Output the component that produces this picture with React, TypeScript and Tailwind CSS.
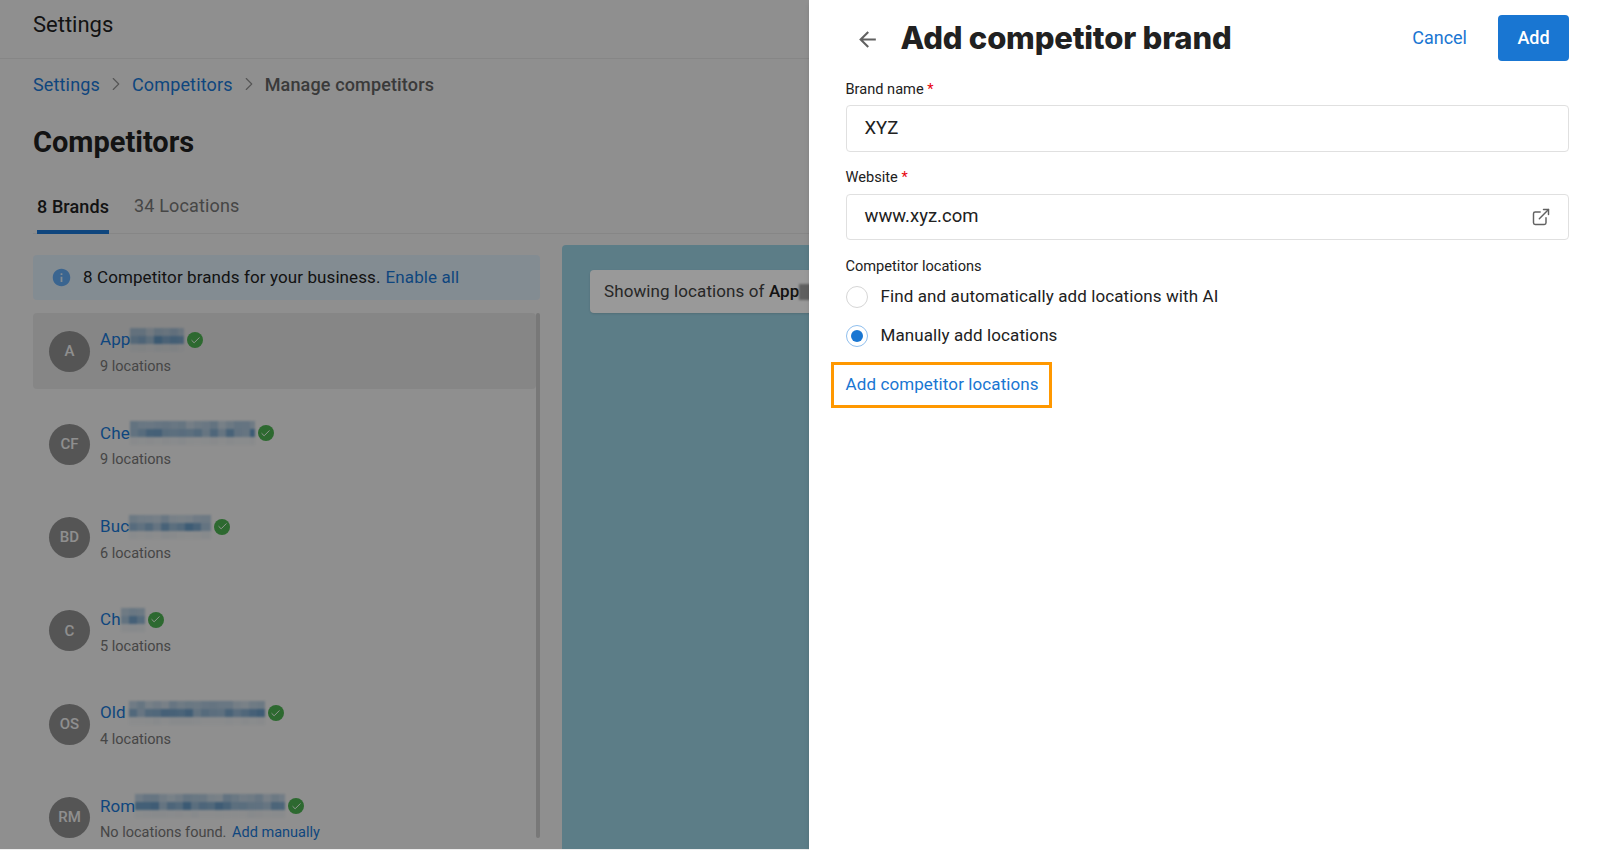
import { ChevronRight, ExternalLink, Check } from 'lucide-react';

interface Brand {
  initials: string;
  name: string;
  blur: number;
  sub: string;
  noLocations?: boolean;
}

const brands: Brand[] = [
  { initials: 'A', name: 'App', blur: 54, sub: '9 locations' },
  { initials: 'CF', name: 'Che', blur: 125, sub: '9 locations' },
  { initials: 'BD', name: 'Buc', blur: 82, sub: '6 locations' },
  { initials: 'C', name: 'Ch', blur: 24, sub: '5 locations' },
  { initials: 'OS', name: 'Old', blur: 136, sub: '4 locations' },
  { initials: 'RM', name: 'Rom', blur: 150, sub: 'No locations found.', noLocations: true },
];

// pixelated part of the name, same mosaic look as the screenshot
function Mosaic({ width, seed }: { width: number; seed: number }) {
  const cols = Math.ceil(width / 8);
  const cells = [];
  for (let c = 0; c < cols; c++) {
    for (let r = 0; r < 3; r++) {
      const n = Math.abs(Math.sin((c + 1) * 12.9 + (r + 1) * 78.2 + seed) * 43758.5) % 1;
      const base = r === 1 ? 0.5 : r === 0 ? 0.26 : 0.04;
      cells.push(<rect key={`${c}-${r}`} x={c * 8} y={r * 8} width={8} height={8} fill="#1565a8" opacity={base * (0.6 + n * 0.7)} />);
    }
  }
  return (
    <svg width={width} height={24} viewBox={`0 0 ${width} 24`} className="block shrink-0 blur-[1px]">
      {cells}
    </svg>
  );
}

function BrandRow({ brand, index }: { brand: Brand; index: number }) {
  return (
    <div className={`flex items-center h-[76px] pl-4 rounded ${index === 0 ? 'bg-[#e0e0e0]' : ''}`}>
      <div className="w-[41px] h-[41px] rounded-full bg-[#8e8e8e] text-[#eeeeee] flex items-center justify-center text-[15px] font-medium shrink-0">
        {brand.initials}
      </div>
      <div className="ml-[10px] pt-[3px]">
        <div className="flex items-center h-[24px]">
          <span className="text-[17px] tracking-[0.1px] text-[#1976d2]">{brand.name}</span>
          <span className={brand.name === 'Old' ? 'ml-[3px]' : ''}>
            <Mosaic width={brand.blur} seed={index * 3.1} />
          </span>
          <span className="ml-[3px] w-[16px] h-[16px] rounded-full bg-[#4caf50] flex items-center justify-center">
            <Check className="w-[11px] h-[11px] text-white" strokeWidth={2} />
          </span>
        </div>
        <div className="text-[14.5px] leading-[20px] mt-[5px] text-[#757575]">
          {brand.sub}
          {brand.noLocations && <span className="ml-[2px] text-[#1976d2]"> Add manually</span>}
        </div>
      </div>
    </div>
  );
}

export default function App() {
  return (
    <div className="relative w-[1600px] h-[850px] overflow-hidden bg-[#eeeeee] font-['Roboto',sans-serif]">
      {/* Pagina de fundo */}
      <div className="h-[59px] px-[33px] pb-[10px] flex items-center border-b border-[#e0e0e0]">
        <h2 className="text-[22px] text-[#212121]">Settings</h2>
      </div>

      <div className="flex items-center h-[24px] mt-[13px] px-[33px] text-[18px] tracking-[0.15px]">
        <span className="text-[#1976d2]">Settings</span>
        <ChevronRight className="w-[22px] h-[22px] mx-[5px] text-[#8e8e8e]" strokeWidth={1.25} />
        <span className="text-[#1976d2]">Competitors</span>
        <ChevronRight className="w-[22px] h-[22px] mx-[5px] text-[#8e8e8e]" strokeWidth={1.25} />
        <span className="font-medium text-[#616161]">Manage competitors</span>
      </div>

      <h1 className="mt-[27px] px-[33px] text-[29px] leading-[38px] font-bold text-[#212121]">Competitors</h1>

      <div className="mt-[24px] ml-[33px] flex items-end h-[49px] border-b border-[#e0e0e0]">
        <div className="ml-[4px] h-[49px] flex items-center border-b-[4px] border-[#1976d2] -mb-px pb-[3px] text-[18px] tracking-[0.1px] font-medium text-[#212121]">
          8 Brands
        </div>
        <div className="ml-[25px] h-[49px] flex items-center pb-[6px] text-[18px] tracking-[0.15px] text-[#757575]">34 Locations</div>
      </div>

      <div className="flex pl-[33px] mt-[11px] h-[604px]">
        <div className="w-[507px] pt-[10px] shrink-0">
          <div className="h-[45px] rounded bg-[#dbe9f4] flex items-center pl-[18px] text-[17px] tracking-[0.1px] text-[#212121]">
            <svg width="21" height="21" viewBox="0 0 24 24" className="fill-[#62a8f0]">
              <path d="M12 2C6.48 2 2 6.48 2 12s4.48 10 10 10 10-4.48 10-10S17.52 2 12 2zm1 15h-2v-6h2v6zm0-8h-2V7h2v2z" />
            </svg>
            <span className="ml-[11px]">8 Competitor brands for your business.</span>
            <span className="ml-[5px] text-[#1976d2]">Enable all</span>
          </div>
          <div className="flex mt-[13px]">
            <div className="w-[503px] flex flex-col gap-[17.3px]">
              {brands.map((brand, i) => (
                <BrandRow key={brand.initials} brand={brand} index={i} />
              ))}
            </div>
            <div className="w-[4px] h-[525px] rounded bg-[#c8c8c8]" />
          </div>
        </div>

        <div className="ml-[22px] flex-1 bg-[#9ad1e2] rounded-tl pt-[25px] pl-[28px]">
          <div className="h-[43px] w-[400px] bg-white rounded flex items-center pl-[14px] text-[17px] tracking-[0.1px] text-[#424242] shadow">
            Showing locations of&nbsp;<span className="font-medium text-[#212121]">App</span>
            <span className="w-[40px] h-[16px] bg-[#9e9e9e] blur-[1px]" />
          </div>
        </div>
      </div>

      {/* Overlay */}
      <div className="absolute inset-x-0 top-0 bottom-px bg-black/40" />

      {/* Drawer */}
      <div className="absolute right-0 top-0 bottom-0 w-[791px] bg-white pl-[36.5px] pr-[31px] pt-[15px] shadow-md">
        <div className="flex items-center h-[46px]">
          <svg width="25" height="25" viewBox="0 0 24 24" className="ml-[9px] mt-[3px] fill-[#616161]">
            <path d="M20 11H7.83l5.59-5.59L12 4l-8 8 8 8 1.41-1.41L7.83 13H20v-2z" />
          </svg>
          <h1 className="ml-[21px] text-[31px] leading-[46px] font-['Inter',sans-serif] font-extrabold text-[#212121] tracking-[-0.2px]">
            Add competitor brand
          </h1>
          <button className="ml-auto mb-[2px] text-[18px] text-[#1976d2]">Cancel</button>
          <button className="ml-[31px] w-[71px] h-[46px] pb-[2px] rounded bg-[#1976d2] text-white text-[18px] font-medium">Add</button>
        </div>

        <label className="block mt-[18px] text-[14.6px] leading-[20px] text-[#212121]">
          Brand name <span className="text-red-600">*</span>
        </label>
        <div className="mt-[6px] h-[47px] rounded border border-[#e0e0e0] flex items-center pl-[18px] text-[18.5px] text-[#212121]">XYZ</div>

        <label className="block mt-[15px] text-[14.6px] leading-[20px] text-[#212121]">
          Website <span className="text-red-600">*</span>
        </label>
        <div className="mt-[7px] h-[46px] rounded border border-[#e0e0e0] flex items-center justify-between pl-[18px] pr-[17px] text-[18.5px] text-[#212121]">
          <span>www.xyz.com</span>
          <ExternalLink className="w-[20px] h-[20px] text-[#616161]" strokeWidth={1.75} />
        </div>

        <div className="mt-[16px] text-[14.6px] leading-[20px] text-[#212121]">Competitor locations</div>

        <div className="mt-[10px] flex items-center h-[22px] text-[17px] tracking-[0.1px] text-[#212121]">
          <span className="w-[22px] h-[22px] rounded-full border border-[#d6d6d6]" />
          <span className="ml-[13px]">Find and automatically add locations with AI</span>
        </div>
        <div className="mt-[17px] flex items-center h-[22px] text-[17px] tracking-[0.1px] text-[#212121]">
          <span className="w-[22px] h-[22px] rounded-full border border-[#90bfee] flex items-center justify-center">
            <span className="w-[12px] h-[12px] rounded-full bg-[#1976d2]" />
          </span>
          <span className="ml-[13px]">Manually add locations</span>
        </div>

        <div className="mt-[15px] -ml-[15px] w-[221px] h-[46px] border-[3px] border-[#ff9800] flex items-center pl-[12px] text-[17px] tracking-[0.1px] whitespace-nowrap text-[#1976d2]">
          Add competitor locations
        </div>
      </div>
    </div>
  );
}
